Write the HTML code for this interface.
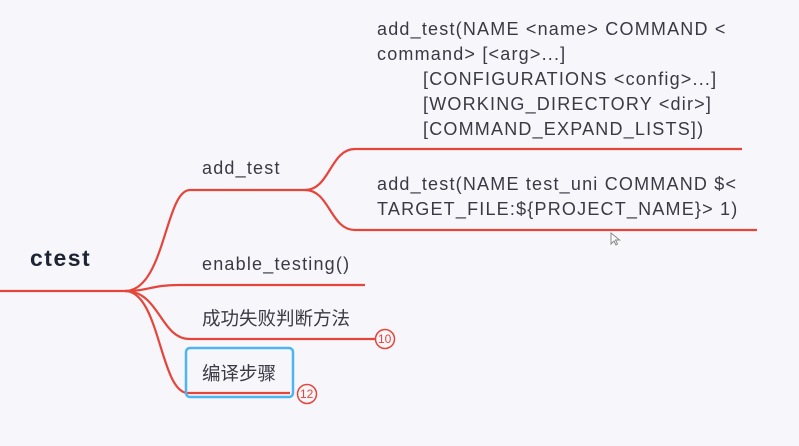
<!DOCTYPE html>
<html><head><meta charset="utf-8"><style>
body{margin:0;width:799px;height:446px;background:#f7f6fa;overflow:hidden;position:relative;font-family:"Liberation Sans","Noto Sans CJK SC",sans-serif;color:#3a3a44}
.t{position:absolute;font-size:18px;letter-spacing:1.2px;white-space:nowrap;line-height:25px}
</style></head><body>
<svg width="799" height="446" style="position:absolute;left:0;top:0" fill="none" stroke="#e5453b" stroke-width="2.2">
<path d="M0 291 H125 C165 291 165 190 190 190 H305 C330 190 330 149 355 149 H742"/>
<path d="M305 190 C330 190 330 230 355 230 H757"/>
<path d="M125 291 C150 291 150 285 180 285 H365"/>
<path d="M125 291 C160 291 160 339 190 339 H375"/>
<path d="M125 291 C160 291 160 393 188 393 H290"/>
<circle cx="385" cy="339" r="9.5" stroke-width="1.5"/>
<circle cx="307" cy="394" r="9.5" stroke-width="1.5"/>
<rect x="186" y="348" width="107" height="49" rx="4" stroke="#4db6f0" stroke-width="2.5"/>
<path d="M611 233 v11 l3 -3 l2 4 l1.5 -1 l-2 -4 h4 z" stroke="#888" stroke-width="1" fill="#fff"/>
</svg>
<div class="t" style="left:30px;top:246px;font-size:23px;letter-spacing:1.5px;font-weight:bold;color:#1d2433">ctest</div>
<div class="t" style="left:202px;top:156px">add_test</div>
<div class="t" style="left:202px;top:252px">enable_testing()</div>
<div class="t" style="left:202px;top:306px;font-size:18.5px;letter-spacing:0">成功失败判断方法</div>
<div class="t" style="left:202px;top:361px;font-size:18.5px;letter-spacing:0">编译步骤</div>
<div class="t" style="left:377px;top:17px">add_test(NAME &lt;name&gt; COMMAND &lt;<br>command&gt; [&lt;arg&gt;...]<br><span style="padding-left:46px">[CONFIGURATIONS &lt;config&gt;...]</span><br><span style="padding-left:46px">[WORKING_DIRECTORY &lt;dir&gt;]</span><br><span style="padding-left:46px">[COMMAND_EXPAND_LISTS])</span></div>
<div class="t" style="left:377px;top:172px">add_test(NAME test_uni COMMAND $&lt;<br>TARGET_FILE:${PROJECT_NAME}&gt; 1)</div>
<div class="t" style="left:378px;top:331px;font-size:12px;letter-spacing:0;line-height:16px;color:#e5453b">10</div>
<div class="t" style="left:300px;top:386px;font-size:12px;letter-spacing:0;line-height:16px;color:#e5453b">12</div>
</body></html>
